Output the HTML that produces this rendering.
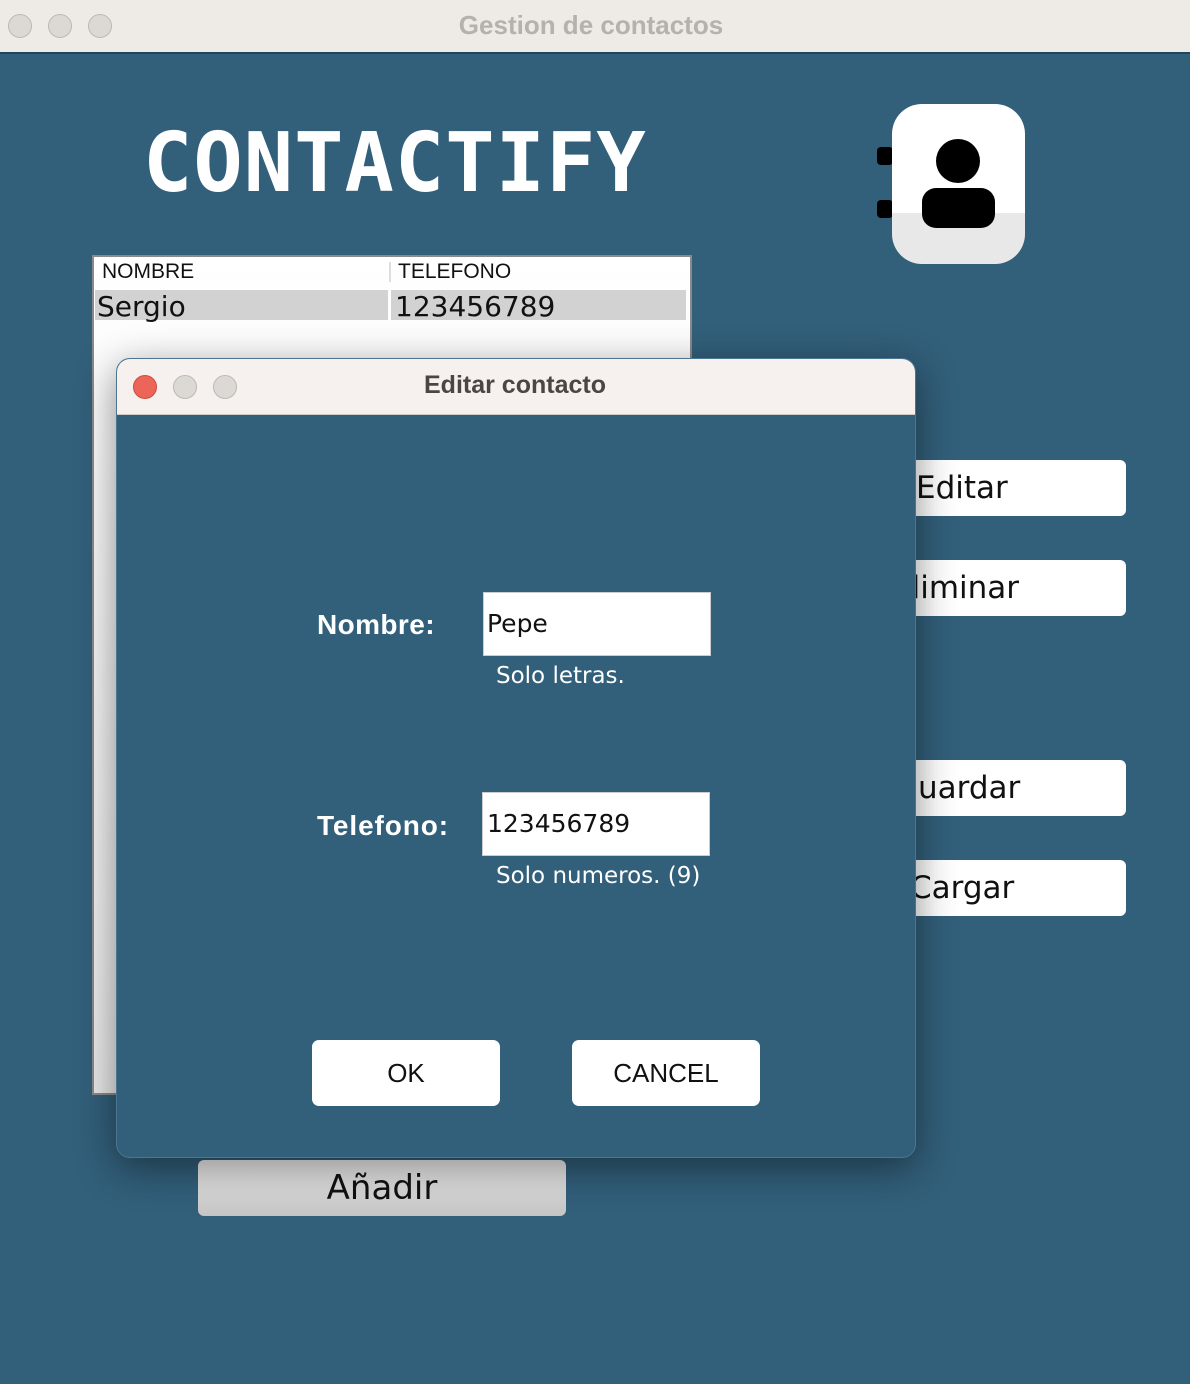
<!DOCTYPE html>
<html><head><meta charset="utf-8"><style>
*{margin:0;padding:0;box-sizing:border-box}
body{width:1190px;height:1384px;background:#325f7a;position:relative;overflow:hidden;font-family:"Liberation Sans","DejaVu Sans",sans-serif}
.abs{position:absolute}
.tb{left:0;top:0;width:1190px;height:54px;background:#eeeae6;border-bottom:2px solid #1f4660}
.dot{width:24px;height:24px;border-radius:50%;background:#dcd8d4;border:1px solid #bdb8b4;top:14px}
.btn{background:#fff;border-radius:6px;font-family:"DejaVu Sans",sans-serif;font-size:31px;color:#111;line-height:56px;overflow:hidden;white-space:nowrap}
.sm{font-family:"DejaVu Sans",sans-serif;color:#fff}
</style></head><body>
<div class="abs tb"></div>
<div class="abs dot" style="left:8px"></div>
<div class="abs dot" style="left:48px"></div>
<div class="abs dot" style="left:88px"></div>
<div class="abs" style="left:0;width:1182px;top:10px;text-align:center;font-weight:bold;font-size:26px;color:#b5b1ad">Gestion de contactos</div>

<div class="abs" style="left:143px;top:116px;font-family:'DejaVu Sans Mono','Liberation Mono',monospace;font-weight:bold;font-size:82px;color:#fff;letter-spacing:1px">CONTACTIFY</div>

<div class="abs" style="left:877px;top:147px;width:16px;height:18px;background:#000;border-radius:4px"></div>
<div class="abs" style="left:877px;top:200px;width:16px;height:18px;background:#000;border-radius:4px"></div>
<div class="abs" style="left:892px;top:104px;width:133px;height:160px;background:linear-gradient(#fff 0,#fff 68%,#e8e8e8 68%);border-radius:30px"></div>
<div class="abs" style="left:936px;top:139px;width:44px;height:44px;background:#000;border-radius:50%"></div>
<div class="abs" style="left:922px;top:188px;width:73px;height:40px;background:#000;border-radius:14px"></div>

<div class="abs" style="left:92px;top:255px;width:600px;height:840px;background:linear-gradient(#fff,#e8e8e8);border:2px solid #8a8a8a"></div>
<div class="abs" style="left:102px;top:260px;font-size:21px;color:#111">NOMBRE</div>
<div class="abs" style="left:389px;top:262px;width:2px;height:20px;background:#ddd"></div>
<div class="abs" style="left:398px;top:260px;font-size:21px;color:#111">TELEFONO</div>
<div class="abs" style="left:95px;top:290px;width:293px;height:30px;background:#d2d2d2"></div>
<div class="abs" style="left:391px;top:290px;width:295px;height:30px;background:#d2d2d2"></div>
<div class="abs sm" style="left:97px;top:290px;font-size:28px;color:#111">Sergio</div>
<div class="abs sm" style="left:395px;top:290px;font-size:28px;color:#111">123456789</div>

<div class="abs btn" style="left:880px;top:460px;width:246px;height:56px;padding-left:36px">Editar</div>
<div class="abs btn" style="left:880px;top:560px;width:246px;height:56px;padding-left:12px">Eliminar</div>
<div class="abs btn" style="left:880px;top:760px;width:246px;height:56px;padding-left:14px">Guardar</div>
<div class="abs btn" style="left:880px;top:860px;width:246px;height:56px;padding-left:30px">Cargar</div>
<div class="abs btn" style="left:198px;top:1160px;width:368px;height:56px;text-align:center;background:linear-gradient(#f2f2f2,#c4c4c4);font-size:34px">Añadir</div>

<div class="abs" style="left:116px;top:358px;width:800px;height:800px;background:#325f7a;border-radius:14px;box-shadow:0 10px 40px rgba(0,0,0,.45);border:1px solid #4c7590;overflow:hidden">
  <div class="abs" style="left:0;top:0;width:800px;height:56px;background:#f6f1ee;border-bottom:1px solid #cfc8c4"></div>
  <div class="abs" style="left:16px;top:16px;width:24px;height:24px;border-radius:50%;background:#ec6559;border:1px solid #d14b40"></div>
  <div class="abs" style="left:56px;top:16px;width:24px;height:24px;border-radius:50%;background:#dcd8d4;border:1px solid #bdb8b4"></div>
  <div class="abs" style="left:96px;top:16px;width:24px;height:24px;border-radius:50%;background:#dcd8d4;border:1px solid #bdb8b4"></div>
  <div class="abs" style="left:0;width:796px;top:12px;text-align:center;font-weight:bold;font-size:25px;color:#4a4643">Editar contacto</div>
  <div class="abs" style="left:200px;top:250px;font-weight:bold;font-size:28px;color:#fff;letter-spacing:0.4px">Nombre:</div>
  <div class="abs" style="left:366px;top:233px;width:228px;height:64px;background:#fff;border:1px solid #ccc;font-family:'DejaVu Sans',sans-serif;font-size:25px;line-height:62px;padding-left:3px;color:#111">Pepe</div>
  <div class="abs sm" style="left:379px;top:304px;font-size:23px">Solo letras.</div>
  <div class="abs" style="left:200px;top:451px;font-weight:bold;font-size:28px;color:#fff;letter-spacing:0.9px">Telefono:</div>
  <div class="abs" style="left:365px;top:433px;width:228px;height:64px;background:#fff;border:1px solid #ccc;font-family:'DejaVu Sans',sans-serif;font-size:25px;line-height:62px;padding-left:4px;color:#111">123456789</div>
  <div class="abs sm" style="left:379px;top:504px;font-size:23px">Solo numeros. (9)</div>
  <div class="abs" style="left:195px;top:681px;width:188px;height:66px;background:#fff;border-radius:7px;text-align:center;line-height:66px;font-size:26px;color:#111">OK</div>
  <div class="abs" style="left:455px;top:681px;width:188px;height:66px;background:#fff;border-radius:7px;text-align:center;line-height:66px;font-size:26px;color:#111">CANCEL</div>
</div>
</body></html>
